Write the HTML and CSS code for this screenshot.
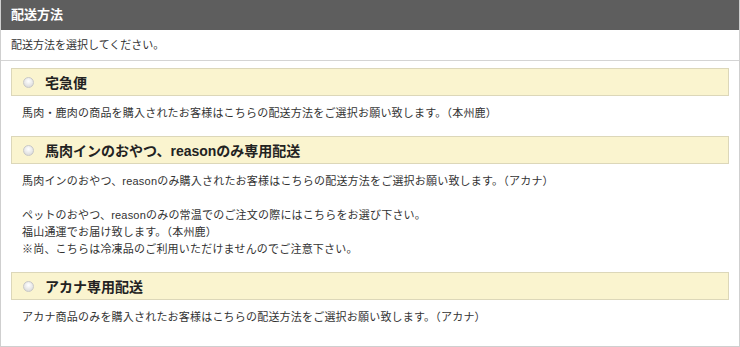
FILE: index.html
```html
<!DOCTYPE html>
<html lang="ja">
<head>
<meta charset="utf-8">
<title>配送方法</title>
<link rel="stylesheet" href="styles.css">
</head>
<body>
<div class="panel">
  <div class="panel-head">配送方法</div>
  <div class="panel-lead">配送方法を選択してください。</div>
  <div class="panel-body">
    <div class="option">
      <label class="option-head"><span class="radio"></span><span class="option-title">宅急便</span></label>
      <p class="option-desc">馬肉・鹿肉の商品を購入されたお客様はこちらの配送方法をご選択お願い致します。（本州鹿）</p>
    </div>
    <div class="option">
      <label class="option-head"><span class="radio"></span><span class="option-title">馬肉インのおやつ、reasonのみ専用配送</span></label>
      <p class="option-desc">馬肉インのおやつ、reasonのみ購入されたお客様はこちらの配送方法をご選択お願い致します。（アカナ）<br><br>ペットのおやつ、reasonのみの常温でのご注文の際にはこちらをお選び下さい。<br>福山通運でお届け致します。（本州鹿）<br>※尚、こちらは冷凍品のご利用いただけませんのでご注意下さい。</p>
    </div>
    <div class="option">
      <label class="option-head"><span class="radio"></span><span class="option-title">アカナ専用配送</span></label>
      <p class="option-desc">アカナ商品のみを購入されたお客様はこちらの配送方法をご選択お願い致します。（アカナ）</p>
    </div>
  </div>
</div>
</body>
</html>
```

FILE: styles.css
```css
html, body {
  margin: 0;
  padding: 0;
  background: #ffffff;
}
body {
  font-family: "Liberation Sans", "Noto Sans CJK JP", sans-serif;
  color: #333333;
  font-size: 11px;
}
.panel {
  width: 738px;
  height: 346px;
  box-sizing: content-box;
  border: 1px solid #cfcfcf;
  border-top: none;
}
.panel-head {
  height: 30px;
  background: #5e5e5e;
  color: #ffffff;
  font-size: 13px;
  font-weight: bold;
  line-height: 30px;
  padding-left: 10px;
}
.panel-lead {
  height: 30px;
  line-height: 30px;
  padding-left: 10px;
  border-bottom: 1px solid #d4d4d4;
}
.panel-body {
  padding: 7px 10px 0 10px;
}
.option-head {
  display: flex;
  align-items: center;
  height: 26px;
  border: 1px solid #dcd7b9;
  background: #faf4cf;
  padding-left: 11px;
}
.radio {
  width: 11px;
  height: 11px;
  border-radius: 50%;
  box-sizing: border-box;
  border: 1px solid #c8c8c8;
  background: radial-gradient(circle at 50% 35%, #ffffff 0%, #ececec 45%, #d2d2d2 100%);
  margin-right: 11px;
}
.option-title {
  font-size: 14px;
  font-weight: bold;
  color: #222222;
}
.option-desc {
  margin: 9px 0 14px 0;
  padding-left: 11px;
  line-height: 17px;
  letter-spacing: 0.2px;
}
```
